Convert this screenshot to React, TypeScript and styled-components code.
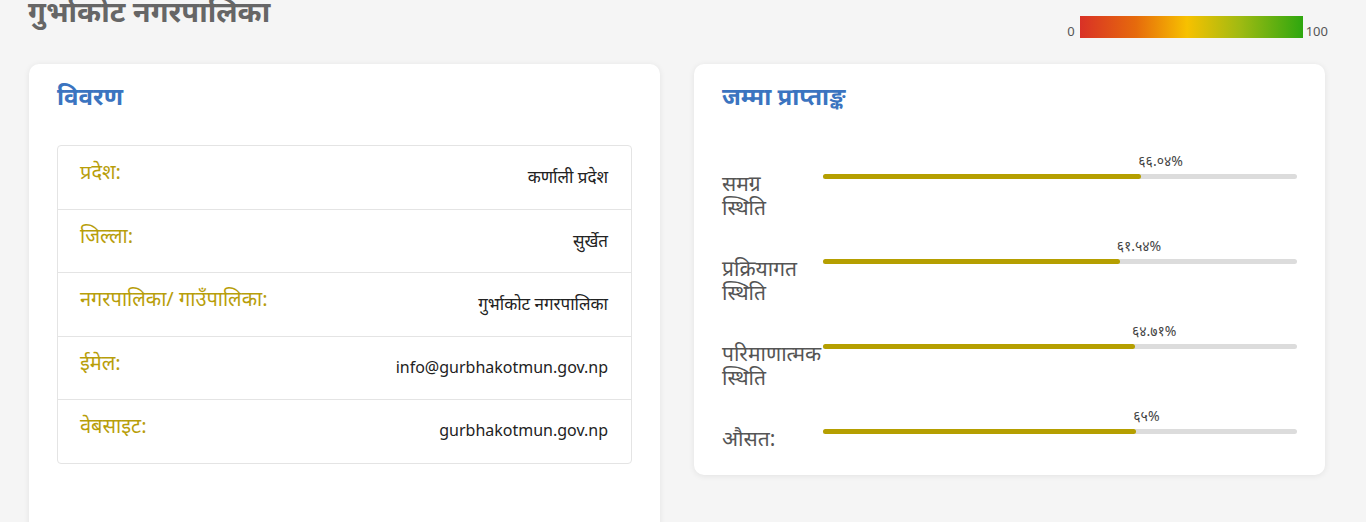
import React from "react";
import styled, { createGlobalStyle } from "styled-components";

const GlobalStyle = createGlobalStyle`
  html, body {
    margin: 0;
    padding: 0;
    background: #f5f5f5;
    font-family: "Noto Sans", "Open Sans", sans-serif;
    overflow: hidden;
  }
`;

const Page = styled.div`
  height: 522px;
  padding: 0 41px 0 29px;
  box-sizing: border-box;
`;

const TopBar = styled.div`
  height: 64px;
  display: flex;
  justify-content: space-between;
  align-items: flex-start;
`;

const PageTitle = styled.h1`
  margin: -9px 0 0 -1px;
  font-size: 29px;
  font-weight: 700;
  color: #666;
  line-height: 1.4;
`;

const Legend = styled.div`
  display: flex;
  align-items: flex-end;
  gap: 3px;
  margin-top: 16px;
  margin-right: -3px;
  font-size: 13px;
  color: #555;
  line-height: 1;
  & > span:first-child {
    margin-right: 2px;
  }
`;

const GradientBar = styled.div`
  width: 223px;
  height: 22px;
  background: linear-gradient(
    to right,
    #d93126 0%,
    #e66a0c 25%,
    #f7c100 48%,
    #9fba12 72%,
    #2ea70f 100%
  );
`;

const Columns = styled.div`
  display: grid;
  grid-template-columns: 1fr 1fr;
  gap: 34px;
  align-items: start;
`;

const Card = styled.section<{ $tall?: boolean }>`
  background: #fff;
  border-radius: 10px;
  box-shadow: 0 1px 6px rgba(0, 0, 0, 0.08);
  padding: 16px 28px 25px;
  min-height: ${(p) => (p.$tall ? "480px" : "auto")};
`;

const CardTitle = styled.h2`
  margin: 0;
  font-size: 24px;
  font-weight: 700;
  color: #3b74c0;
  line-height: 32px;
`;

const InfoTable = styled.div`
  margin-top: 33px;
  border: 1px solid #e4e4e4;
  border-radius: 4px;
`;

const InfoRow = styled.div`
  height: 62.6px;
  display: flex;
  justify-content: space-between;
  padding: 0 23px 0 22px;
  border-top: 1px solid #e4e4e4;
  &:first-child {
    border-top: none;
  }
`;

const InfoLabel = styled.span`
  font-size: 20px;
  color: #b89e0a;
  padding-top: 12px;
`;

const InfoValue = styled.span<{ $latin?: boolean }>`
  font-size: ${(p) => (p.$latin ? "16px" : "17px")};
  color: #222;
  padding-top: 19px;
`;

const ScoreList = styled.div`
  margin-top: 36px;
  display: flex;
  flex-direction: column;
  gap: 8px;
`;

const ScoreRow = styled.div`
  display: grid;
  grid-template-columns: 101px 1fr;
  height: 77px;
  &:last-child {
    height: auto;
  }
`;

const ScoreLabel = styled.div`
  max-width: 84px;
  font-size: 21px;
  color: #555;
  line-height: 24px;
  padding-top: 23px;
  white-space: normal;
`;

const BarWrap = styled.div`
  position: relative;
  padding-top: 26px;
`;

const Track = styled.div`
  height: 5px;
  border-radius: 3px;
  background: #dcdcdc;
  position: relative;
`;

const Fill = styled.div`
  height: 100%;
  border-radius: 3px;
  background: #b59f00;
`;

const Percent = styled.span`
  position: absolute;
  top: 3px;
  font-size: 14px;
  color: #444;
  margin-left: -3px;
`;

const details = [
  { label: "प्रदेश:", value: "कर्णाली प्रदेश" },
  { label: "जिल्ला:", value: "सुर्खेत" },
  { label: "नगरपालिका/ गाउँपालिका:", value: "गुर्भाकोट नगरपालिका" },
  { label: "ईमेल:", value: "info@gurbhakotmun.gov.np", latin: true },
  { label: "वेबसाइट:", value: "gurbhakotmun.gov.np", latin: true },
];

const scores = [
  { label: "समग्र स्थिति", text: "६६.०४%", value: 66.04 },
  { label: "प्रक्रियागत स्थिति", text: "६१.५४%", value: 61.54 },
  { label: "परिमाणात्मक स्थिति", text: "६४.७१%", value: 64.71 },
  { label: "औसत:", text: "६५%", value: 65 },
];

export default function App() {
  return (
    <Page>
      <GlobalStyle />
      <TopBar>
        <PageTitle>गुर्भाकोट नगरपालिका</PageTitle>
        <Legend>
          <span>0</span>
          <GradientBar />
          <span>100</span>
        </Legend>
      </TopBar>
      <Columns>
        <Card $tall>
          <CardTitle>विवरण</CardTitle>
          <InfoTable>
            {details.map((d) => (
              <InfoRow key={d.label}>
                <InfoLabel>{d.label}</InfoLabel>
                <InfoValue $latin={d.latin}>{d.value}</InfoValue>
              </InfoRow>
            ))}
          </InfoTable>
        </Card>
        <Card>
          <CardTitle>जम्मा प्राप्ताङ्क</CardTitle>
          <ScoreList>
            {scores.map((s) => {
              const w = Math.min(100, s.value * 1.017);
              return (
                <ScoreRow key={s.label}>
                  <ScoreLabel>{s.label}</ScoreLabel>
                  <BarWrap>
                    <Percent style={{ left: `${w}%` }}>{s.text}</Percent>
                    <Track>
                      <Fill style={{ width: `${w}%` }} />
                    </Track>
                  </BarWrap>
                </ScoreRow>
              );
            })}
          </ScoreList>
        </Card>
      </Columns>
    </Page>
  );
}
